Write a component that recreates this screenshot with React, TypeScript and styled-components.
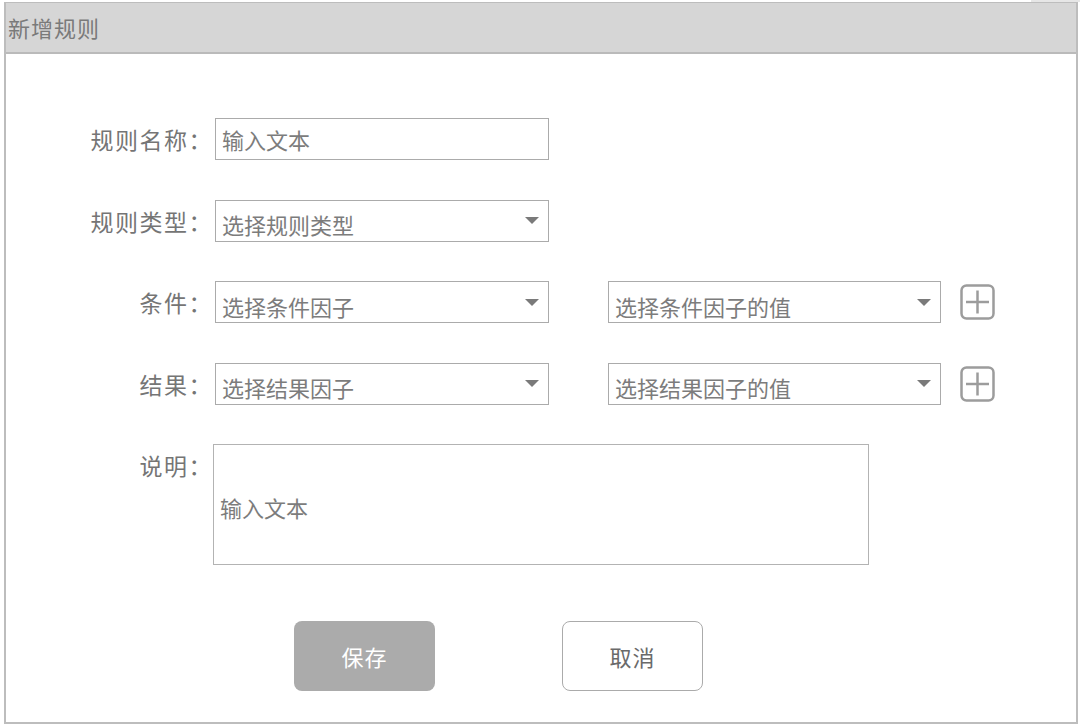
import React from "react";
import styled, { createGlobalStyle } from "styled-components";

const Global = createGlobalStyle`
  html, body { margin: 0; padding: 0; background: #ffffff; }
  body { font-family: "Noto Sans CJK SC", "Noto Sans", sans-serif; }
  * { box-sizing: border-box; }
`;

const Page = styled.div`
  width: 1080px;
  height: 727px;
  display: flex;
  flex-direction: column;
  overflow: hidden;
`;

const TopStrip = styled.div`
  height: 2px;
  display: flex;
  justify-content: flex-end;
`;

const StripPiece = styled.div`
  width: 49px;
  background: #e6e6e6;
`;

const Frame = styled.div`
  margin-left: 4px;
  width: 1074px;
  height: 722px;
  border: 2px solid #bdbdbd;
  border-top-width: 1px;
  display: flex;
  flex-direction: column;
`;

const Header = styled.div`
  height: 51px;
  background: #d6d6d6;
  border-bottom: 2px solid #bababa;
  display: flex;
  align-items: center;
  padding-left: 2px;
  padding-bottom: 2px;
  font-size: 22px;
  letter-spacing: 1px;
  color: #7a7a7a;
`;

const Form = styled.div`
  display: flex;
  flex-direction: column;
  gap: 39.5px;
  padding-top: 64px;
`;

const Row = styled.div<{ $top?: boolean }>`
  display: flex;
  align-items: ${(p) => (p.$top ? "flex-start" : "center")};
`;

const Label = styled.div`
  width: 207px;
  height: 42px;
  line-height: 42px;
  text-align: right;
  font-size: 23px;
  letter-spacing: 1.5px;
  color: #757575;
  white-space: nowrap;
  flex-shrink: 0;
`;

const Field = styled.div<{ $w: number; $ml?: number; $select?: boolean }>`
  width: ${(p) => p.$w}px;
  height: 42px;
  margin-left: ${(p) => p.$ml ?? 2}px;
  border: 1.5px solid #ababab;
  background: #fff;
  display: flex;
  align-items: center;
  padding-left: 6px;
  padding-right: 9px;
  padding-top: ${(p) => (p.$select ? 7 : 0)}px;
  font-size: 22px;
  color: #7c7c7c;
  flex-shrink: 0;
`;

const FieldText = styled.span`
  flex: 1;
  white-space: nowrap;
`;

const Caret = styled.span`
  width: 0;
  height: 0;
  border-left: 7.5px solid transparent;
  border-right: 7.5px solid transparent;
  border-top: 7px solid #7a7a7a;
  margin-top: -7px;
`;

const PlusButton = styled.div`
  margin-left: 19px;
  width: 35px;
  height: 35px;
  display: flex;
  align-items: center;
  justify-content: center;
`;

const TextArea = styled.div`
  width: 656px;
  height: 121px;
  margin-left: 0px;
  border: 1.5px solid #b3b3b3;
  display: flex;
  align-items: center;
  padding-left: 6px;
  padding-top: 5px;
  font-size: 22px;
  color: #7c7c7c;
`;

const Buttons = styled.div`
  display: flex;
  gap: 127px;
  padding-left: 288px;
  margin-top: 56px;
`;

const Button = styled.div<{ $primary?: boolean }>`
  width: 141px;
  height: 70px;
  border-radius: 8px;
  display: flex;
  align-items: center;
  justify-content: center;
  font-size: 22px;
  letter-spacing: 1px;
  background: ${(p) => (p.$primary ? "#ababab" : "#ffffff")};
  color: ${(p) => (p.$primary ? "#ffffff" : "#6a6a6a")};
  border: ${(p) => (p.$primary ? "none" : "1.5px solid #ababab")};
`;

const PlusIcon = () => (
  <svg width="35" height="36" viewBox="0 0 35 36" fill="none">
    <rect x="1.5" y="1.5" width="32" height="33" rx="5" stroke="#9c9c9c" strokeWidth="2.5" />
    <line x1="6" y1="18" x2="29" y2="18" stroke="#9c9c9c" strokeWidth="2.5" />
    <line x1="17.5" y1="6.5" x2="17.5" y2="29.5" stroke="#9c9c9c" strokeWidth="2.5" />
  </svg>
);

const Select = ({ text, w, ml }: { text: string; w: number; ml?: number }) => (
  <Field $w={w} $ml={ml} $select>
    <FieldText>{text}</FieldText>
    <Caret />
  </Field>
);

export default function App() {
  return (
    <Page>
      <Global />
      <TopStrip>
        <StripPiece />
      </TopStrip>
      <Frame>
        <Header>新增规则</Header>
        <Form>
          <Row>
            <Label>规则名称：</Label>
            <Field $w={334}>
              <FieldText>输入文本</FieldText>
            </Field>
          </Row>
          <Row>
            <Label>规则类型：</Label>
            <Select text="选择规则类型" w={334} />
          </Row>
          <Row>
            <Label>条件：</Label>
            <Select text="选择条件因子" w={334} />
            <Select text="选择条件因子的值" w={333} ml={59} />
            <PlusButton>
              <PlusIcon />
            </PlusButton>
          </Row>
          <Row>
            <Label>结果：</Label>
            <Select text="选择结果因子" w={334} />
            <Select text="选择结果因子的值" w={333} ml={59} />
            <PlusButton>
              <PlusIcon />
            </PlusButton>
          </Row>
          <Row $top>
            <Label>说明：</Label>
            <TextArea>输入文本</TextArea>
          </Row>
        </Form>
        <Buttons>
          <Button $primary>保存</Button>
          <Button>取消</Button>
        </Buttons>
      </Frame>
    </Page>
  );
}
